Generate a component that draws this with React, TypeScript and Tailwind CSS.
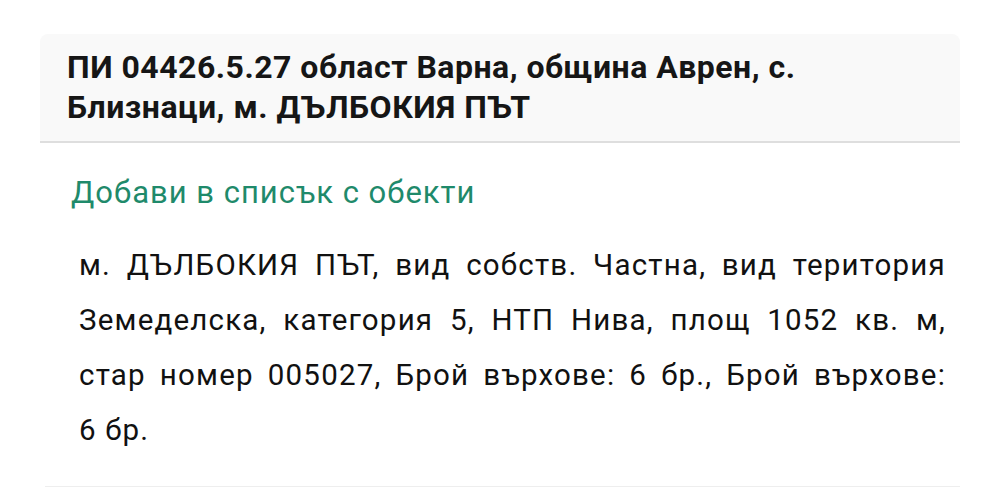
export default function App() {
  return (
    <div className="min-h-screen bg-white pt-[34px] font-['Roboto',sans-serif]">
      <div className="mx-[40px]">
        <div className="rounded-t-lg border-b-2 border-[#dedede] bg-[#f9f9f9] px-[27px] pb-[14px] pt-[13px]">
          <h1 className="text-[32px] font-bold leading-[40px] tracking-[0.5px] text-[#161616]">
            ПИ 04426.5.27 област Варна, община Аврен, с. Близнаци, м. ДЪЛБОКИЯ ПЪТ
          </h1>
        </div>
        <div className="px-[31px] pt-[30px]">
          <a className="block text-[31px] leading-[40px] tracking-[1px] text-[#1f8a6b]">Добави в списък с обекти</a>
        </div>
        <p className="mt-[25px] pl-[39px] pr-[14px] text-justify text-[29.5px] leading-[55px] tracking-[1.2px] text-[#111]">
          м. ДЪЛБОКИЯ ПЪТ, вид собств. Частна, вид територия Земеделска, категория 5, НТП Нива, площ 1052 кв. м, стар номер 005027, Брой върхове: 6&nbsp;бр., Брой върхове: 6&nbsp;бр.
        </p>
        <div className="mt-[28px] ml-[5px] border-b border-[#eeeeee]" />
      </div>
    </div>
  );
}
